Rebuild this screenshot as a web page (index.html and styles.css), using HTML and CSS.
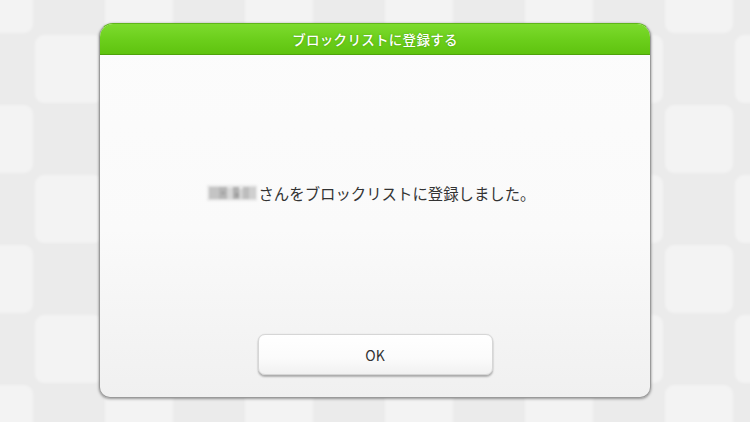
FILE: index.html
```html
<!DOCTYPE html>
<html lang="ja">
<head>
<meta charset="utf-8">
<link rel="stylesheet" href="styles.css">
</head>
<body>
<svg class="bg" width="750" height="422" aria-hidden="true">
  <defs>
    <filter id="soft" x="-10%" y="-10%" width="120%" height="120%">
      <feGaussianBlur stdDeviation="1.2"/>
    </filter>
    <pattern id="checks" x="-36" y="-36" width="140" height="140" patternUnits="userSpaceOnUse">
      <rect width="140" height="140" fill="#ebebeb"/>
      <rect x="1" y="1" width="68" height="68" rx="9" fill="#f3f3f3" filter="url(#soft)"/>
      <rect x="71" y="71" width="68" height="68" rx="9" fill="#f3f3f3" filter="url(#soft)"/>
    </pattern>
  </defs>
  <rect width="750" height="422" fill="url(#checks)"/>
</svg>
<div class="dialog">
  <div class="dialog-header">ブロックリストに登録する</div>
  <div class="dialog-body">
    <p class="message"><svg class="mosaic" width="50" height="16" aria-hidden="true">
        <rect x="0" y="0" width="50" height="16" fill="#e9e9e9"/>
        <rect x="2" y="2" width="10" height="12" fill="#c4c4c4"/>
        <rect x="12" y="2" width="8" height="12" fill="#b6b6b6"/>
        <rect x="20" y="3" width="6" height="11" fill="#d6d6d6"/>
        <rect x="26" y="2" width="6" height="12" fill="#b0b0b0"/>
        <rect x="32" y="4" width="4" height="10" fill="#d2d2d2"/>
        <rect x="36" y="2" width="6" height="12" fill="#bdbdbd"/>
        <rect x="42" y="2" width="7" height="12" fill="#cfcfcf"/>
        <rect x="14" y="6" width="4" height="4" fill="#a8a8a8"/>
        <rect x="28" y="8" width="4" height="4" fill="#9f9f9f"/>
      </svg>さんをブロックリストに登録しました。</p>
    <button class="ok-button" type="button">OK</button>
  </div>
</div>
</body>
</html>
```
FILE: styles.css
```css
html, body {
  margin: 0;
  padding: 0;
}
body {
  width: 750px;
  height: 422px;
  overflow: hidden;
  position: relative;
  background: #ebebeb;
  font-family: "Noto Sans CJK JP", "Noto Sans", sans-serif;
}
.bg {
  position: absolute;
  left: 0;
  top: 0;
  z-index: 0;
}
.dialog {
  position: relative;
  z-index: 1;
  margin: 23px 0 0 99px;
  width: 552px;
  height: 375px;
  box-sizing: border-box;
  border-radius: 14px 14px 11px 11px;
  border: 1px solid #9a9a9a;
  border-top-color: #5fb51a;
  background: linear-gradient(#fcfcfc 0%, #fafafa 55%, #f0f0f0 100%);
  box-shadow: 0 1px 3px rgba(0,0,0,0.35), 0 0 2px rgba(0,0,0,0.15);
  display: flex;
  flex-direction: column;
  overflow: hidden;
}
.dialog-header {
  height: 30px;
  flex: none;
  background: linear-gradient(#7ddb2e 0%, #6ccf1c 50%, #5fc30f 100%);
  border-bottom: 1px solid #4ea20a;
  color: #ffffff;
  font-size: 13.5px;
  font-weight: 500;
  line-height: 31px;
  text-align: center;
  letter-spacing: 0.3px;
  text-shadow: 0 0 2px rgba(40,110,0,0.5);
}
.dialog-body {
  flex: 1;
  display: flex;
  flex-direction: column;
  align-items: center;
  padding-top: 128px;
  padding-bottom: 22px;
}
.message {
  margin: 0 7px 0 0;
  font-size: 15.4px;
  line-height: 20px;
  color: #333333;
  display: flex;
  align-items: center;
}
.mosaic {
  display: block;
  filter: blur(0.8px);
  margin-right: 1px;
}
.ok-button {
  margin-top: auto;
  width: 235px;
  height: 41px;
  border-radius: 7px;
  border: 1px solid #d6d6d6;
  background: linear-gradient(#ffffff 0%, #fbfbfb 60%, #f1f1f1 100%);
  box-shadow: 0 2px 2px rgba(0,0,0,0.28), 0 0 1px rgba(0,0,0,0.2);
  font-family: "Noto Sans CJK JP", "Noto Sans", sans-serif;
  font-size: 14px;
  color: #333333;
  padding: 0;
}
```
